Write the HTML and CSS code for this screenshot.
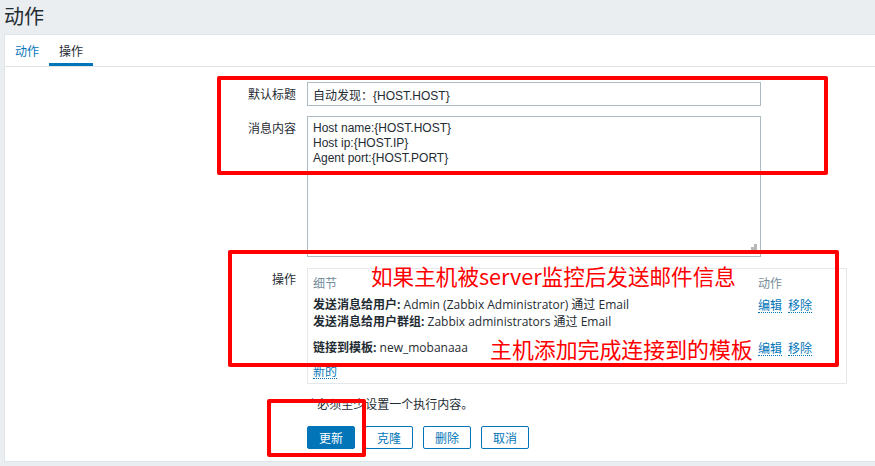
FILE: index.html
```html
<!DOCTYPE html>
<html lang="zh">
<head>
<meta charset="utf-8">
<title>动作</title>
<link rel="stylesheet" href="styles.css">
</head>
<body>
<header class="page-head">
  <h1 class="page-title">动作</h1>
</header>
<main class="panel">
  <nav class="tabs">
    <a class="tab">动作</a>
    <a class="tab tab-active">操作</a>
  </nav>
  <form class="form">
    <div class="row">
      <label class="label">默认标题</label>
      <div class="field"><input class="input" type="text" value="自动发现：{HOST.HOST}"></div>
    </div>
    <div class="row">
      <label class="label">消息内容</label>
      <div class="field">
        <div class="textarea-wrap">
          <textarea class="textarea">Host name:{HOST.HOST}
Host ip:{HOST.IP}
Agent port:{HOST.PORT}</textarea>
          <span class="grip"></span>
        </div>
      </div>
    </div>
    <div class="row row-ops">
      <label class="label">操作</label>
      <div class="field">
        <div class="ops">
          <div class="ops-row ops-head">
            <div class="ops-detail">细节</div>
            <div class="ops-action">动作</div>
          </div>
          <div class="ops-row">
            <div class="ops-detail">
              <div><b>发送消息给用户:</b> Admin (Zabbix Administrator) 通过 Email</div>
              <div><b>发送消息给用户群组:</b> Zabbix administrators 通过 Email</div>
            </div>
            <div class="ops-action"><a class="link">编辑</a><a class="link">移除</a></div>
          </div>
          <div class="ops-row">
            <div class="ops-detail"><b>链接到模板:</b> new_mobanaaa</div>
            <div class="ops-action"><a class="link">编辑</a><a class="link">移除</a></div>
          </div>
          <div class="ops-new"><a class="link">新的</a></div>
        </div>
      </div>
    </div>
    <div class="row row-note">
      <span class="label"></span>
      <div class="field note"><span class="ast">*</span> 必须至少设置一个执行内容。</div>
    </div>
    <div class="row row-buttons">
      <span class="label"></span>
      <div class="field buttons">
        <button type="button" class="btn btn-primary">更新</button>
        <button type="button" class="btn">克隆</button>
        <button type="button" class="btn">删除</button>
        <button type="button" class="btn">取消</button>
      </div>
    </div>
  </form>
  <div class="mark mark-1"></div>
  <div class="mark mark-2"></div>
  <div class="mark mark-3"></div>
  <div class="note-red note-red-1">如果主机被server监控后发送邮件信息</div>
  <div class="note-red note-red-2">主机添加完成连接到的模板</div>
</main>
</body>
</html>
```

FILE: styles.css
```css
* { box-sizing: border-box; }
html, body { margin: 0; padding: 0; }
body {
  background: #ebeef0;
  font-family: "Liberation Sans", "Noto Sans CJK SC", sans-serif;
  font-size: 12px;
  color: #1f2c33;
  width: 875px;
  height: 466px;
  overflow: hidden;
}
.page-head { height: 34px; padding-left: 4px; display: flex; align-items: center; }
.page-title {
  margin: 0;
  font-family: "Noto Sans CJK SC", sans-serif;
  font-size: 20px;
  font-weight: 400;
  line-height: 24px;
  color: #1f2c33;
  position: relative;
  top: -1px;
}
.panel {
  position: relative;
  margin-left: 4px;
  height: 428px;
  background: #fff;
  border: 1px solid #dfe4e7;
  border-right: none;
}
.tabs {
  height: 32px;
  display: flex;
  border-bottom: 1px solid #dfe4e7;
}
.tab {
  display: flex;
  align-items: center;
  padding: 0 10px;
  height: 31px;
  color: #0275b8;
  font-family: "Noto Sans CJK SC", sans-serif;
  font-size: 12px;
  border-bottom: 3px solid transparent;
  padding-top: 3px;
}
.tab-active { color: #1f2c33; border-bottom-color: #0275b8; }
.form { padding-top: 15px; display: flex; flex-direction: column; }
.row { display: grid; grid-template-columns: 291px 540px; column-gap: 11px; margin-bottom: 10px; }
.label {
  text-align: right;
  font-family: "Noto Sans CJK SC", sans-serif;
  font-size: 12px;
  line-height: 24px;
}
.input {
  display: block;
  width: 454px;
  height: 24px;
  border: 1px solid #acbbc2;
  padding: 0 5px;
  font-family: "Liberation Sans", "Noto Sans CJK SC", sans-serif;
  font-size: 12px;
  color: #1f2c33;
  outline: none;
}
.textarea-wrap { position: relative; width: 454px; height: 141px; }
.textarea {
  display: block;
  width: 454px;
  height: 141px;
  border: 1px solid #acbbc2;
  padding: 4px 5px;
  font-family: "Liberation Sans", "Noto Sans CJK SC", sans-serif;
  font-size: 12px;
  line-height: 15px;
  color: #1f2c33;
  resize: none;
  outline: none;
}
.grip {
  position: absolute;
  right: 4px;
  bottom: 4px;
  width: 9px;
  height: 9px;
  background:
    linear-gradient(#b5b9bc, #b5b9bc) 6px 0 / 3px 3px no-repeat,
    linear-gradient(#b5b9bc, #b5b9bc) 3px 3px / 3px 3px no-repeat,
    linear-gradient(#b5b9bc, #b5b9bc) 6px 3px / 3px 3px no-repeat,
    linear-gradient(#b5b9bc, #b5b9bc) 0 6px / 3px 3px no-repeat,
    linear-gradient(#b5b9bc, #b5b9bc) 3px 6px / 3px 3px no-repeat,
    linear-gradient(#b5b9bc, #b5b9bc) 6px 6px / 3px 3px no-repeat;
}
.row-ops { margin-top: 1px; }
.row-ops .label { line-height: 20px; padding-top: 1px; }
.ops {
  width: 540px;
  border: 1px solid #e4e8ea;
  padding: 0 5px 4px 5px;
  font-family: "Open Sans", "Noto Sans CJK SC", sans-serif;
  font-size: 12px;
  line-height: 17px;
}
.ops-row { display: flex; padding: 4px 0 5px; }
.ops-head { height: 23px; padding: 5px 0 0; color: #768d99; font-family: "Noto Sans CJK SC", sans-serif; font-size: 12px; }
.ops-detail { flex: 1; }
.ops-detail b { font-weight: 700; font-family: "Open Sans", "Noto Sans CJK SC", sans-serif; }
.ops-action { width: 83px; display: flex; gap: 6px; align-items: flex-start; }
.link {
  color: #0275b8;
  font-family: "Noto Sans CJK SC", sans-serif;
  font-size: 12px;
  line-height: 15px;
  border-bottom: 1px dotted #0275b8;
  text-decoration: none;
  margin-top: 1px;
}
.ops-new { padding-top: 1px; display: flex; }
.row-note { margin-top: 0; margin-bottom: 0; }
.note {
  font-family: "Noto Sans CJK SC", sans-serif;
  font-size: 12px;
  line-height: 20px;
  padding-left: 3px;
}
.ast { color: #1f2c33; font-size: 10px; position: relative; top: -3px; }
.row-buttons { margin-top: 11px; }
.buttons { display: flex; gap: 10px; }
.btn {
  height: 23px;
  padding: 0 11px;
  border: 1px solid #0275b8;
  border-radius: 2px;
  background: #fff;
  color: #0275b8;
  font-family: "Noto Sans CJK SC", sans-serif;
  font-size: 12px;
  line-height: 21px;
}
.btn-primary { background: #0275b8; color: #fff; }
.mark {
  position: absolute;
  border: 4px solid #ff0000;
  border-radius: 2px;
}
.mark-1 { left: 212px; top: 41px; width: 611px; height: 99px; }
.mark-2 { left: 223px; top: 215px; width: 611px; height: 117px; }
.mark-3 { left: 262px; top: 364px; width: 99px; height: 58px; }
.note-red {
  position: absolute;
  color: #ff0000;
  font-family: "Noto Sans CJK SC", sans-serif;
  font-weight: 400;
  white-space: nowrap;
}
.note-red-1 { left: 366px; top: 226px; font-size: 21.6px; line-height: 30px; }
.note-red-2 { left: 485px; top: 299px; font-size: 21.9px; line-height: 30px; }
```
